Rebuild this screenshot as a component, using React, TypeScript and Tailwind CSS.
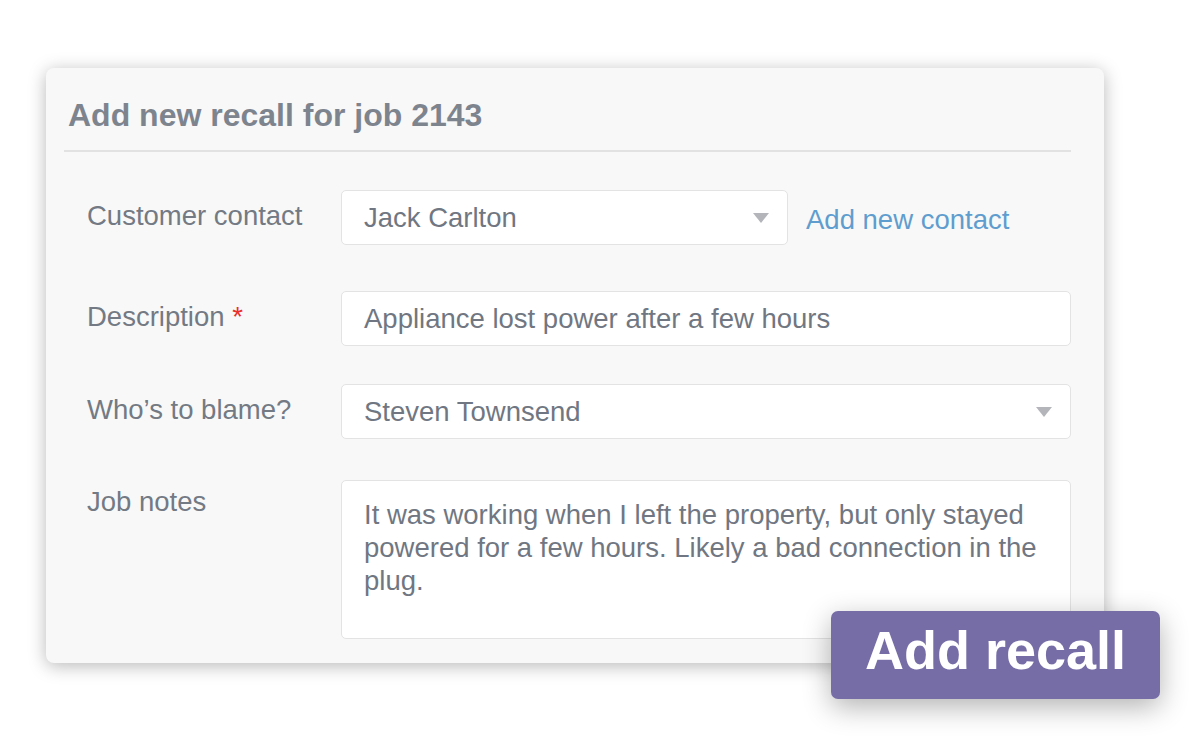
import { ReactNode } from "react";

const font = { fontFamily: '"Liberation Sans", Arial, sans-serif' };

function Caret() {
  return (
    <svg width="16" height="10" viewBox="0 0 16 10" className="shrink-0">
      <path d="M0 0 L16 0 L8 10 Z" fill="#b3b5ba" />
    </svg>
  );
}

function Row({ label, children, className, labelPad }: { label: ReactNode; children: ReactNode; className?: string; labelPad?: string }) {
  return (
    <div className={`flex items-start ${className ?? ""}`}>
      <div className={`w-[254px] shrink-0 ${labelPad ?? "pt-[11px]"} text-[27.5px] leading-[30px] text-[#737a84]`}>{label}</div>
      {children}
    </div>
  );
}

export default function App() {
  return (
    <main className="relative h-[739px] w-[1200px] overflow-hidden bg-white" style={font}>
      <div className="pl-[46px] pt-[68px]">
        <div className="h-[595px] w-[1058px] rounded-[8px] bg-[#f8f8f8] shadow-[0_3px_18px_rgba(0,0,0,0.28)]">
          <div className="ml-[18px] mr-[33px] border-b-2 border-[#e2e2e2] pl-[4px] pt-[29px] pb-[17px]">
            <h1 className="text-[32px] font-bold leading-[36px] text-[#7e848e]">Add new recall for job 2143</h1>
          </div>

          <div className="pl-[41px] pr-[33px] pt-[38px]">
            <Row label="Customer contact">
              <div className="flex h-[55px] w-[447px] items-center justify-between rounded-[5px] border border-[#e3e3e3] bg-white pl-[22px] pr-[18px]">
                <span className="text-[27.5px] text-[#707782]">Jack Carlton</span>
                <Caret />
              </div>
              <a className="ml-[18px] pt-[15px] text-[27.5px] leading-[30px] text-[#5f9dcf]">Add new contact</a>
            </Row>

            <Row label={<>Description <span className="text-[#e8312b]">*</span></>} className="mt-[46px]">
              <div className="flex h-[55px] flex-1 items-center rounded-[5px] border border-[#e3e3e3] bg-white pl-[22px]">
                <span className="text-[27.5px] text-[#707782]">Appliance lost power after a few hours</span>
              </div>
            </Row>

            <Row label="Who’s to blame?" className="mt-[38px]">
              <div className="flex h-[55px] flex-1 items-center justify-between rounded-[5px] border border-[#e3e3e3] bg-white pl-[22px] pr-[18px]">
                <span className="text-[27.5px] text-[#707782]">Steven Townsend</span>
                <Caret />
              </div>
            </Row>

            <Row label="Job notes" className="mt-[41px]" labelPad="pt-[7px]">
              <div className="h-[159px] flex-1 rounded-[5px] border border-[#e3e3e3] bg-white pl-[22px] pr-[30px] pt-[17px]">
                <p className="text-[27.5px] leading-[33px] text-[#707782]">
                  It was working when I left the property, but only stayed powered for a few hours. Likely a bad connection in the plug.
                </p>
              </div>
            </Row>
          </div>
        </div>
      </div>

      <button className="absolute left-[831px] top-[611px] flex h-[88px] w-[329px] items-center justify-center rounded-[7px] bg-[#766ca6] pb-[9px] text-[54px] font-bold text-white shadow-[0_8px_28px_rgba(0,0,0,0.3)]">
        Add recall
      </button>
    </main>
  );
}
